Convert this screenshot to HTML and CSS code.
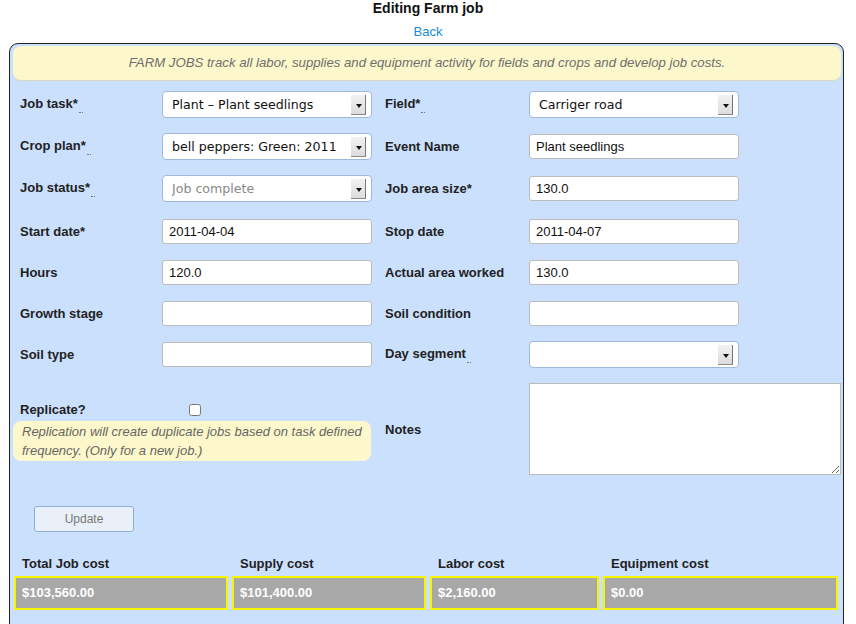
FILE: index.html
```html
<!DOCTYPE html>
<html>
<head>
<meta charset="utf-8">
<link rel="stylesheet" href="styles.css">
</head>
<body>
<h1 class="title">Editing Farm job</h1>
<div class="back"><a href="#">Back</a></div>
<div class="panel">
  <div class="notice">FARM JOBS track all labor, supplies and equipment activity for fields and crops and develop job costs.</div>
  <div class="form-grid">
    <label class="lbl">Job task*<span class="hint"></span></label>
    <span class="sel"><select><option>Plant – Plant seedlings</option></select></span>
    <label class="lbl lbl-r">Field*<span class="hint"></span></label>
    <span class="sel"><select><option>Carriger road</option></select></span>

    <label class="lbl">Crop plan*<span class="hint"></span></label>
    <span class="sel"><select><option>bell peppers: Green: 2011</option></select></span>
    <label class="lbl lbl-r">Event Name</label>
    <input class="txt" type="text" value="Plant seedlings">

    <label class="lbl">Job status*<span class="hint"></span></label>
    <span class="sel"><select class="muted"><option>Job complete</option></select></span>
    <label class="lbl lbl-r">Job area size*</label>
    <input class="txt" type="text" value="130.0">

    <label class="lbl">Start date*</label>
    <input class="txt" type="text" value="2011-04-04">
    <label class="lbl lbl-r">Stop date</label>
    <input class="txt" type="text" value="2011-04-07">

    <label class="lbl">Hours</label>
    <input class="txt" type="text" value="120.0">
    <label class="lbl lbl-r">Actual area worked</label>
    <input class="txt" type="text" value="130.0">

    <label class="lbl">Growth stage</label>
    <input class="txt" type="text" value="">
    <label class="lbl lbl-r">Soil condition</label>
    <input class="txt" type="text" value="">

    <label class="lbl">Soil type</label>
    <input class="txt" type="text" value="">
    <label class="lbl lbl-r">Day segment<span class="hint"></span></label>
    <span class="sel"><select><option></option></select></span>
  </div>

  <div class="rep-section">
    <div class="rep-left">
      <div class="rep-row">
        <label class="lbl rep-lbl">Replicate?</label>
        <input class="chk" type="checkbox">
      </div>
      <div class="rep-note">Replication will create duplicate jobs based on task defined frequency. (Only for a new job.)</div>
    </div>
    <label class="lbl notes-lbl">Notes</label>
    <textarea class="notes"></textarea>
  </div>

  <button class="update">Update</button>

  <div class="costs">
    <div class="cost-lbl">Total Job cost</div>
    <div class="cost-lbl">Supply cost</div>
    <div class="cost-lbl">Labor cost</div>
    <div class="cost-lbl">Equipment cost</div>
    <div class="cost-box">$103,560.00</div>
    <div class="cost-box">$101,400.00</div>
    <div class="cost-box">$2,160.00</div>
    <div class="cost-box">$0.00</div>
  </div>
</div>
</body>
</html>
```
FILE: styles.css
```css
* { box-sizing: border-box; }
body {
  margin: 0;
  font-family: "Liberation Sans", Arial, sans-serif;
  font-size: 13px;
  color: #222;
  background: #fff;
}
.title {
  margin: 0;
  font-size: 14px;
  line-height: 16px;
  font-weight: bold;
  text-align: center;
  color: #111;
}
.back {
  text-align: center;
  margin-top: 8px;
  line-height: 16px;
  font-size: 13px;
}
.back a { color: #1a8cd0; text-decoration: none; }
.panel {
  margin: 3px 12px 0 9px;
  border: 1px solid #222;
  border-radius: 9px;
  background: #cbe0fd;
  padding: 2px 2px 40px 3px;
}
.notice {
  height: 35px;
  line-height: 33px;
  background: #fdf8cb;
  border-radius: 8px;
  border-bottom: 1px solid #d8d6bd;
  text-align: center;
  font-style: italic;
  color: #6e6e6e;
  font-size: 13.2px;
}
.form-grid {
  margin-top: 2px;
  margin-left: 7px;
  display: grid;
  grid-template-columns: 142px 210px 157px 210px;
  grid-template-rows: 42px 42px 43px 42px 41px 40px 42px;
  align-items: center;
}
.lbl {
  font-weight: bold;
  font-size: 13px;
  color: #222;
}
.lbl-r { padding-left: 13px; }
.hint {
  display: inline-block;
  width: 4px;
  height: 1px;
  margin-left: 1px;
  vertical-align: -5px;
  border-bottom: 1px dotted #777;
}
.sel {
  position: relative;
  display: block;
  height: 27px;
}
.sel select {
  appearance: none;
  -webkit-appearance: none;
  width: 210px;
  height: 27px;
  border: 1px solid #9db9de;
  border-radius: 4px;
  background: #fff;
  font-family: "DejaVu Sans", "Lucida Grande", sans-serif;
  font-size: 12.6px;
  color: #111;
  padding: 0 0 0 9px;
}
.sel select.muted { color: #888; }
.sel::after {
  content: "";
  position: absolute;
  right: 6px;
  top: 4px;
  width: 14px;
  height: 19px;
  background: linear-gradient(#f2f2f2, #dcdcdc);
  border-right: 1px solid #777;
  border-bottom: 1px solid #888;
  pointer-events: none;
}
.sel::before {
  content: "";
  position: absolute;
  right: 10px;
  top: 13px;
  width: 0;
  height: 0;
  border-left: 3px solid transparent;
  border-right: 3px solid transparent;
  border-top: 4px solid #111;
  z-index: 1;
  pointer-events: none;
}
.txt {
  width: 210px;
  height: 25px;
  border: 1px solid #bbb;
  border-radius: 3px;
  background: #fff;
  font-family: "Liberation Sans", Arial, sans-serif;
  font-size: 13px;
  color: #111;
  padding: 0 0 0 6px;
}
.rep-section {
  display: flex;
  align-items: center;
  margin-top: 8px;
}
.rep-left {
  width: 358px;
  padding-top: 4px;
}
.rep-row {
  display: flex;
  align-items: center;
  height: 16px;
  padding-left: 7px;
}
.rep-lbl { width: 169px; }
.chk {
  margin: 0;
  width: 12px;
  height: 12px;
}
.rep-note {
  margin-top: 3px;
  background: #fdf8cb;
  border-radius: 8px;
  padding: 1px 6px 1px 9px;
  font-style: italic;
  color: #666;
  font-size: 13px;
  line-height: 19px;
}
.notes-lbl {
  width: 158px;
  padding-left: 14px;
}
.notes {
  width: 312px;
  height: 92px;
  border: 1px solid #bbb;
  background: #fff;
  resize: both;
}
.update {
  display: block;
  margin: 31px 0 0 21px;
  width: 100px;
  height: 26px;
  border: 1px solid #8fb0d8;
  border-radius: 3px;
  background: #eaf0f8;
  color: #777;
  font-family: "Liberation Sans", Arial, sans-serif;
  font-size: 12px;
}
.costs {
  margin: 24px 0 0 1px;
  display: grid;
  grid-template-columns: 214px 194px 169px 235px;
  column-gap: 4px;
  row-gap: 4px;
}
.cost-lbl {
  padding-left: 8px;
  font-weight: bold;
  font-size: 13px;
  line-height: 16px;
  color: #222;
}
.cost-box {
  height: 34px;
  line-height: 30px;
  background: #a8a8a8;
  border: 2px solid #f6f600;
  color: #fff;
  font-weight: bold;
  font-size: 13px;
  padding-left: 6px;
}
```
